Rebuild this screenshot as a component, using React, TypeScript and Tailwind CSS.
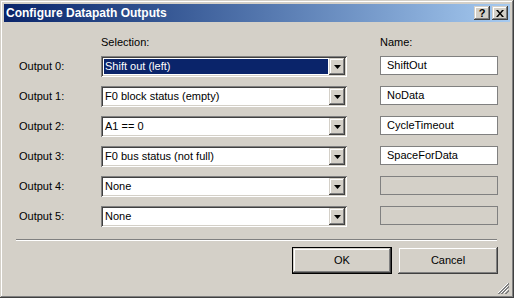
import React from 'react';

const raised =
  'shadow-[inset_-1px_-1px_#404040,inset_1px_1px_#d4d0c8,inset_-2px_-2px_#808080,inset_2px_2px_#ffffff]';
const sunken =
  'shadow-[inset_1px_1px_#808080,inset_-1px_-1px_#ffffff,inset_2px_2px_#404040,inset_-2px_-2px_#d4d0c8]';

type Row = { label: string; value: string; name: string | null; selected?: boolean };

const rows: Row[] = [
  { label: 'Output 0:', value: 'Shift out (left)', name: 'ShiftOut', selected: true },
  { label: 'Output 1:', value: 'F0 block status (empty)', name: 'NoData' },
  { label: 'Output 2:', value: 'A1 == 0', name: 'CycleTimeout' },
  { label: 'Output 3:', value: 'F0 bus status (not full)', name: 'SpaceForData' },
  { label: 'Output 4:', value: 'None', name: null },
  { label: 'Output 5:', value: 'None', name: null },
];

const CaptionButton = ({ children }: { children: React.ReactNode }) => (
  <div
    className={`w-[16px] h-[14px] bg-[#d4d0c8] ${raised} flex items-center justify-center text-black font-bold text-[11px] leading-none`}
  >
    {children}
  </div>
);

const Combo = ({ value, selected }: { value: string; selected?: boolean }) => (
  <div className={`w-[246px] h-[21px] bg-white ${sunken} flex items-stretch p-[2px]`}>
    <div className="flex-1 flex items-stretch p-[1px]">
      <div
        className={`flex-1 flex items-center pl-[1px] ${selected ? 'bg-[#0a246a] text-white' : 'text-black'}`}
      >
        {value}
      </div>
    </div>
    <div className={`w-[16px] bg-[#d4d0c8] ${raised} flex items-center justify-center`}>
      <svg width="7" height="4" viewBox="0 0 7 4">
        <path d="M0 0h7L3.5 4z" fill="#000" />
      </svg>
    </div>
  </div>
);

const NameBox = ({ name }: { name: string | null }) => (
  <div
    className={`w-[118px] h-[19px] self-start border border-[#808080] flex items-center pl-[6px] text-black ${name === null ? 'bg-[#d4d0c8]' : 'bg-white'}`}
  >
    {name}
  </div>
);

export default function App() {
  return (
    <div
      className={`w-[514px] h-[298px] bg-[#d4d0c8] p-[4px] flex flex-col font-['Liberation_Sans',Arial,sans-serif] text-[11px] leading-[13px] text-black overflow-hidden shadow-[inset_-1px_-1px_#404040,inset_1px_1px_#d4d0c8,inset_-2px_-2px_#808080,inset_2px_2px_#ffffff]`}
    >
      {/* title bar */}
      <div className="h-[18px] flex items-center bg-gradient-to-r from-[#0a246a] to-[#a6caf0] pl-[2px] pr-[2px]">
        <span className="flex-1 text-white font-bold text-[12px]">Configure Datapath Outputs</span>
        <div className="flex gap-[2px]">
          <CaptionButton>?</CaptionButton>
          <CaptionButton>
            <svg width="8" height="7" viewBox="0 0 8 7">
              <path d="M0 0h2l2 2.5L6 0h2L5 3.5 8 7H6L4 4.5 2 7H0l3-3.5z" fill="#000" />
            </svg>
          </CaptionButton>
        </div>
      </div>

      {/* body */}
      <div className="flex-1 flex flex-col pt-[14px] pl-[15px] relative">
        <div className="flex h-[13px]">
          <div className="w-[82px]" />
          <div className="w-[246px]">Selection:</div>
          <div className="ml-[33px]">Name:</div>
        </div>

        <div className="flex flex-col gap-[9px] mt-[7px]">
          {rows.map((r) => (
            <div key={r.label} className="flex items-center h-[21px]">
              <div className="w-[82px]">{r.label}</div>
              <Combo value={r.value} selected={r.selected} />
              <div className="ml-[33px] h-full flex">
                <NameBox name={r.name} />
              </div>
            </div>
          ))}
        </div>

        <div className="mt-[12px] ml-[-3px] mr-[13px] h-[2px] border-t border-t-[#808080] border-b border-b-white" />

        <div className="flex justify-end gap-[6px] mt-[6px] mr-[12px]">
          <div className="w-[100px] h-[27px] border border-black flex">
            <div className={`flex-1 ${raised} flex items-center justify-center`}>OK</div>
          </div>
          <div className={`w-[100px] h-[27px] ${raised} flex items-center justify-center`}>Cancel</div>
        </div>

        <svg className="absolute right-[1px] bottom-[0px]" width="12" height="12" viewBox="0 0 12 12">
          <path d="M11 1L1 11M11 4L4 11M11 7L7 11" stroke="#ffffff" strokeWidth="1" />
          <path d="M12 1L1 12M12 2L2 12M12 4L4 12M12 5L5 12M12 8L8 12M12 9L9 12" stroke="#808080" strokeWidth="1" />
        </svg>
      </div>
    </div>
  );
}
